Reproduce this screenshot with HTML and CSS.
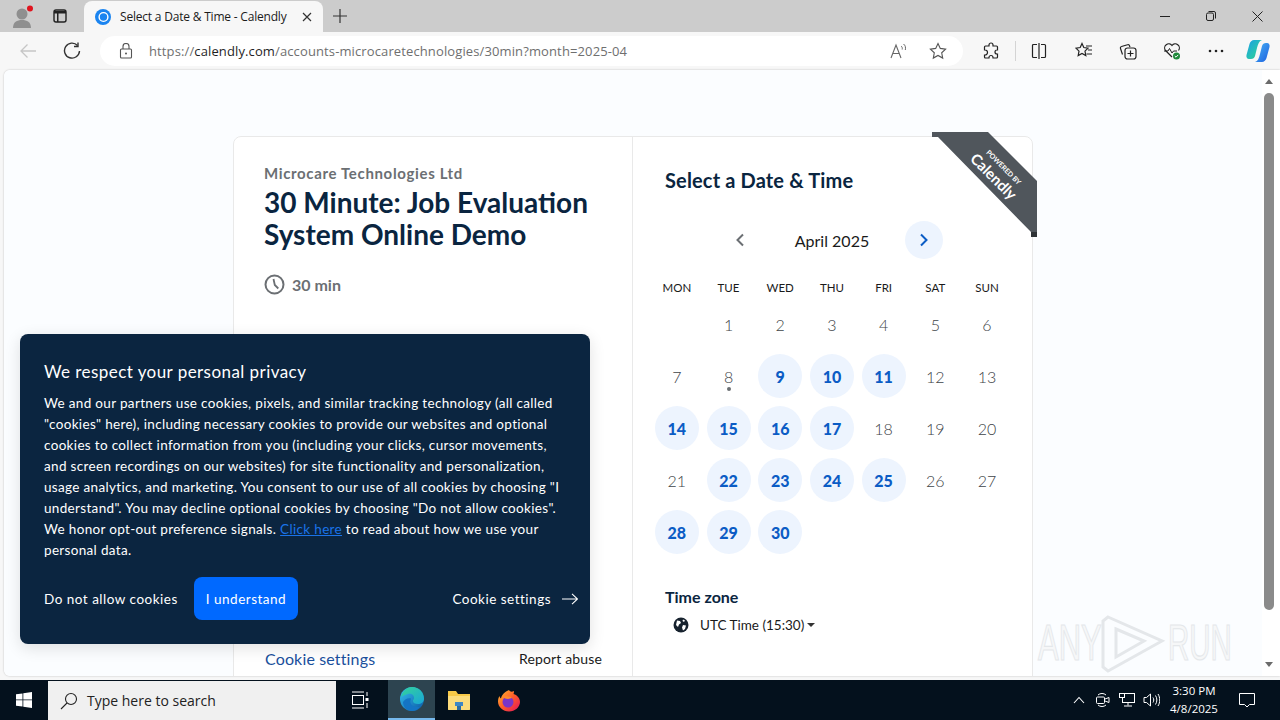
FILE: index.html
```html
<!DOCTYPE html>
<html lang="en">
<head>
<meta charset="UTF-8" />
<title>Select a Date &amp; Time - Calendly</title>
<link rel="stylesheet" href="styles.css">
</head>
<body>
<div class="screen">

  <!-- browser tab strip -->
  <div class="tabstrip">
    <div class="profile">
      <svg width="24" height="26" viewBox="0 0 24 26"><circle cx="10" cy="11" r="5.500" fill="#8f8f8f"/><path d="M1 25c0-6 4-8 9-8s9 2 9 8z" fill="#8f8f8f"/><circle cx="18" cy="5.500" r="3" fill="#e0141e"/></svg>
    </div>
    <div class="tabs-btn">
      <svg width="16" height="16" viewBox="0 0 16 16"><rect x="2" y="2" width="12" height="12" rx="2" fill="none" stroke="#222" stroke-width="1.400"/><path d="M2 3h12v2.500H6.500V14H5V5.500H2z" fill="#222"/></svg>
    </div>
    <div class="tab">
      <svg class="tab-icon" width="16" height="16" viewBox="0 0 16 16"><circle cx="8" cy="8" r="8" fill="#1a84f0"/><circle cx="8.500" cy="8" r="4.400" fill="none" stroke="#fff" stroke-width="1.400"/></svg>
      <span class="tab-title">Select a Date &amp; Time - Calendly</span>
      <svg class="tab-close" width="10" height="10" viewBox="0 0 10 10"><path d="M1 1l8 8M9 1l-8 8" stroke="#333" stroke-width="1.200"/></svg>
    </div>
    <div class="new-tab">
      <svg width="14" height="14" viewBox="0 0 14 14"><path d="M7 0v14M0 7h14" stroke="#333" stroke-width="1.200"/></svg>
    </div>
    <div class="grow"></div>
    <div class="win-btn"><svg width="10" height="10" viewBox="0 0 10 10"><path d="M0 5.500h10" stroke="#222"/></svg></div>
    <div class="win-btn"><svg width="10" height="10" viewBox="0 0 10 10"><rect x=".5" y="2" width="7" height="7.500" rx="1.500" fill="none" stroke="#222"/><path d="M2.500 .5h5.500a1.500 1.500 0 0 1 1.500 1.500v5.500" fill="none" stroke="#222"/></svg></div>
    <div class="win-btn"><svg width="11" height="11" viewBox="0 0 11 11"><path d="M.5 .5l10 10M10.500 .5l-10 10" stroke="#222"/></svg></div>
  </div>

  <!-- address bar row -->
  <div class="toolbar">
    <div class="nav-btn back">
      <svg width="18" height="16" viewBox="0 0 18 16"><path d="M17 8H2M8.500 1.500L2 8l6.500 6.500" fill="none" stroke="#c6c6c6" stroke-width="1.300"/></svg>
    </div>
    <div class="nav-btn reload">
      <svg width="18" height="18" viewBox="0 0 18 18"><path d="M14.500 3.500A7.500 7.500 0 1 0 16.500 9" fill="none" stroke="#333" stroke-width="1.400"/><path d="M15 .5v4h-4" fill="none" stroke="#333" stroke-width="1.400"/></svg>
    </div>
    <div class="address">
      <svg class="lock" width="14" height="16" viewBox="0 0 14 16"><rect x="1.500" y="6" width="11" height="9" rx="1" fill="none" stroke="#555" stroke-width="1.100"/><path d="M4 6V3.500a3 3 0 0 1 6 0V6" fill="none" stroke="#555" stroke-width="1.100"/><circle cx="7" cy="10.500" r="1" fill="#555"/></svg>
      <span class="url">https://<b>calendly.com</b>/accounts-microcaretechnologies/30min?month=2025-04</span>
      <div class="grow"></div>
      <svg class="addr-icon read" width="18" height="16" viewBox="0 0 18 16"><path d="M1 15L6 2l5 13M3 10.500h6" fill="none" stroke="#666" stroke-width="1.100"/><path d="M11 3c1.200.8 1.500 2 1.200 3.500M13.500 1c2 1.500 2.300 3.500 1.800 6" fill="none" stroke="#666"/></svg>
      <svg class="addr-icon star" width="18" height="18" viewBox="0 0 18 18"><path d="M9 1.500l2.300 4.900 5.300.7-3.900 3.700 1 5.300L9 13.500l-4.700 2.600 1-5.300-3.900-3.700 5.300-.7z" fill="none" stroke="#555" stroke-width="1.100"/></svg>
    </div>
    <div class="tool ext">
      <svg width="18" height="18" viewBox="0 0 18 18"><path d="M7 3a2 2 0 0 1 4 0v1h3.500a1 1 0 0 1 1 1v3H15a2 2 0 0 0 0 4h.5v3a1 1 0 0 1-1 1H11v-.5a2 2 0 0 0-4 0v.500H3.500a1 1 0 0 1-1-1V13H3a2.500 2.500 0 0 0 0-5h-.5V5a1 1 0 0 1 1-1H7z" fill="none" stroke="#222" stroke-width="1.200"/></svg>
    </div>
    <div class="tool-sep"></div>
    <div class="tool">
      <svg width="16" height="16" viewBox="0 0 16 16"><path d="M6 1.500H2.500a1 1 0 0 0-1 1v11a1 1 0 0 0 1 1H6M10 1.500h3.500a1 1 0 0 1 1 1v11a1 1 0 0 1-1 1H10M8 0v16" fill="none" stroke="#222" stroke-width="1.200"/></svg>
    </div>
    <div class="tool tool-fav">
      <svg width="18" height="18" viewBox="0 0 18 18"><path d="M7 1.500l1.800 4 4.200.6-3 3 .8 4.400L7 11.400l-3.800 2.100.8-4.400-3-3 4.200-.6z" fill="none" stroke="#222" stroke-width="1.200"/><path d="M11 4h6M13 8h4M11.500 12H17" stroke="#222" stroke-width="1.200"/></svg>
    </div>
    <div class="tool">
      <svg width="18" height="18" viewBox="0 0 18 18"><rect x="6" y="6" width="11" height="11" rx="2.500" fill="none" stroke="#222" stroke-width="1.200"/><path d="M11.500 8.500v6M8.500 11.500h6M3.500 12.500L1.500 6.500a1.500 1.500 0 0 1 1-2l6-1.800a1.500 1.500 0 0 1 2 1l.5 1.300" fill="none" stroke="#222" stroke-width="1.200"/></svg>
    </div>
    <div class="tool">
      <svg width="18" height="18" viewBox="0 0 18 18"><path d="M9 15L2.500 8.500a4 4 0 0 1 6.500-5 4 4 0 0 1 6.500 5" fill="none" stroke="#222" stroke-width="1.200"/><path d="M1 9h4l1.500-2.500L9 11l1.500-2H14" fill="none" stroke="#222"/><circle cx="13.500" cy="14" r="3.500" fill="#1f8a3b"/><path d="M11.800 14l1.200 1.200 2.200-2.300" fill="none" stroke="#fff"/></svg>
    </div>
    <div class="tool">
      <svg width="16" height="4" viewBox="0 0 16 4"><circle cx="2" cy="2" r="1.300" fill="#222"/><circle cx="8" cy="2" r="1.300" fill="#222"/><circle cx="14" cy="2" r="1.300" fill="#222"/></svg>
    </div>
    <div class="tool copilot">
      <svg width="24" height="24" viewBox="0 0 24 24"><defs><linearGradient id="cp1" x1="0" y1="0" x2="1" y2="1"><stop offset="0" stop-color="#1b9ee8"/><stop offset=".6" stop-color="#28c4b0"/><stop offset="1" stop-color="#2fb67e"/></linearGradient><linearGradient id="cp2" x1="0" y1="0" x2="1" y2="1"><stop offset="0" stop-color="#48b6f5"/><stop offset="1" stop-color="#1d5fe0"/></linearGradient></defs><path d="M8 1h8c-3 1-4 4-5 8l-2 8c-.5 2-2 3-4 3H3c-2 0-3-2-2.500-4l3-11C4 3 6 1 8 1z" fill="url(#cp1)"/><path d="M16 23H9c3-1 4-4 5-8l2-8c.5-2 2-3 4-3h1c2 0 3 2 2.500 4l-3 11c-.5 2-2.500 4-4.500 4z" fill="url(#cp2)"/></svg>
    </div>
  </div>

  <!-- page area -->
  <div class="viewport">
    <div class="content">
      <div class="card">
        <section class="event">
          <div class="org">Microcare Technologies Ltd</div>
          <h1 class="event-title">30 Minute: Job Evaluation System Online Demo</h1>
          <div class="duration">
            <svg width="21" height="21" viewBox="0 0 21 21"><circle cx="10.500" cy="10.500" r="9" fill="none" stroke="#6b6f73" stroke-width="2"/><path d="M9.500 5l1.300 6 3.500 3.500" fill="none" stroke="#6b6f73" stroke-width="1.800"/></svg>
            <span>30 min</span>
          </div>
          <div class="grow"></div>
          <div class="event-foot">
            <a class="foot-link">Cookie settings</a>
            <a class="foot-report">Report abuse</a>
          </div>
        </section>

        <section class="picker">
          <h2 class="picker-title">Select a Date &amp; Time</h2>
          <div class="month-nav">
            <span class="arrow">
              <svg width="10" height="14" viewBox="0 0 10 14"><path d="M8 1.500L2.500 7 8 12.500" fill="none" stroke="#6b6f73" stroke-width="2"/></svg>
            </span>
            <span class="month">April 2025</span>
            <span class="arrow arrow-next">
              <svg width="10" height="14" viewBox="0 0 10 14"><path d="M2 1.500L7.500 7 2 12.500" fill="none" stroke="#0b5cc5" stroke-width="2"/></svg>
            </span>
          </div>
          <div class="weekdays">
            <span>MON</span><span>TUE</span><span>WED</span><span>THU</span><span>FRI</span><span>SAT</span><span>SUN</span>
          </div>
          <div class="days">
            <span class="day"></span>
            <span class="day">1</span>
            <span class="day">2</span>
            <span class="day">3</span>
            <span class="day">4</span>
            <span class="day">5</span>
            <span class="day">6</span>
            <span class="day">7</span>
            <span class="day today">8</span>
            <span class="day open">9</span>
            <span class="day open">10</span>
            <span class="day open">11</span>
            <span class="day">12</span>
            <span class="day">13</span>
            <span class="day open">14</span>
            <span class="day open">15</span>
            <span class="day open">16</span>
            <span class="day open">17</span>
            <span class="day">18</span>
            <span class="day">19</span>
            <span class="day">20</span>
            <span class="day">21</span>
            <span class="day open">22</span>
            <span class="day open">23</span>
            <span class="day open">24</span>
            <span class="day open">25</span>
            <span class="day">26</span>
            <span class="day">27</span>
            <span class="day open">28</span>
            <span class="day open">29</span>
            <span class="day open">30</span>
          </div>
          <div class="tz">
            <div class="tz-label">Time zone</div>
            <div class="tz-value">
              <svg width="16" height="16" viewBox="0 0 16 16"><circle cx="8" cy="8" r="7.500" fill="#17222e"/><path d="M4 3.500l3 .5 1 2-2 1.500-1 2.500-2-2zM10 8l3 .5-1 3.500-2 1.500-1-3zM10 2.500l2 1-1 1.500-1.500-1z" fill="#fff"/></svg>
              <span>UTC Time (15:30)</span>
              <i class="caret"></i>
            </div>
          </div>
        </section>

        <!-- corner ribbon -->
        <div class="ribbon">
          <svg width="105" height="105" viewBox="0 0 105 105"><path d="M0 0l6 5h-6zM99 100h6v5h-6z" fill="#2e3236"/><path d="M0 0h56l49 49v51h-6L6 5H0z" fill="#50565c"/></svg>
          <span class="ribbon-small">POWERED BY</span>
          <span class="ribbon-name">Calendly</span>
        </div>
      </div>

      <!-- cookie notice -->
      <div class="cookie">
        <div class="cookie-title">We respect your personal privacy</div>
        <p class="cookie-text">We and our partners use cookies, pixels, and similar tracking technology (all called "cookies" here), including necessary cookies to provide our websites and optional cookies to collect information from you (including your clicks, cursor movements, and screen recordings on our websites) for site functionality and personalization, usage analytics, and marketing. You consent to our use of all cookies by choosing "I understand". You may decline optional cookies by choosing "Do not allow cookies". We honor opt-out preference signals. <a class="cookie-link">Click here</a> to read about how we use your personal data.</p>
        <div class="grow"></div>
        <div class="cookie-actions">
          <a class="cookie-deny">Do not allow cookies</a>
          <button class="cookie-accept">I understand</button>
          <div class="grow"></div>
          <a class="cookie-settings">Cookie settings
            <svg width="16" height="12" viewBox="0 0 16 12"><path d="M0 6h15.500M10 .8L15.500 6 10 11.200" fill="none" stroke="#fff" stroke-width="1.100"/></svg>
          </a>
        </div>
      </div>

      <!-- sandbox watermark -->
      <svg class="watermark" width="200" height="64" viewBox="0 0 200 64">
        <g transform="translate(2 51) scale(.62 1)"><text class="wm-text">ANY</text></g>
        <path d="M72 8l54 24-54 30-5-4V12zM80 20l28 12-28 16z" fill="none" stroke="#e4e7ea" stroke-width="3"/>
        <g transform="translate(132 51) scale(.59 1)"><text class="wm-text">RUN</text></g>
      </svg>
    </div>

    <div class="scrollbar">
      <i class="sb-up"></i>
      <div class="sb-thumb"></div>
      <i class="sb-down"></i>
    </div>
  </div>

  <!-- windows taskbar -->
  <div class="taskbar">
    <div class="start">
      <svg width="16" height="16" viewBox="0 0 16 16"><path d="M0 2.300l6.500-.9v6.100H0zM7.300 1.300L16 0v7.500H7.300zM0 8.300h6.500v6.200L0 13.700zM7.300 8.300H16V16l-8.700-1.200z" fill="#fff"/></svg>
    </div>
    <div class="search">
      <svg width="18" height="18" viewBox="0 0 18 18"><circle cx="11" cy="7" r="5.500" fill="none" stroke="#222" stroke-width="1.100"/><path d="M7 11l-6 6" stroke="#222" stroke-width="1.100"/></svg>
      <span>Type here to search</span>
    </div>
    <div class="task-item">
      <svg width="18" height="18" viewBox="0 0 18 18"><path d="M1 1h12M1 17h12" stroke="#fff"/><rect x="1.500" y="4.500" width="11" height="9" fill="none" stroke="#fff"/><path d="M16 1v4M16 12v5" stroke="#fff"/><rect x="14.500" y="7" width="3" height="3" fill="#fff"/></svg>
    </div>
    <div class="task-item task-active">
      <svg width="24" height="24" viewBox="0 0 24 24"><defs><linearGradient id="ed1" x1="0" y1="0" x2="1" y2="1"><stop offset="0" stop-color="#35c1f1"/><stop offset="1" stop-color="#0c59a4"/></linearGradient><linearGradient id="ed2" x1="0" y1="0" x2="1" y2="1"><stop offset="0" stop-color="#34d399"/><stop offset="1" stop-color="#1aa6d8"/></linearGradient></defs><circle cx="12" cy="12" r="12" fill="url(#ed1)"/><path d="M1 10C3 3 8 0 12 0c7 0 12 5 12 12 0 3-3 5-6 5-3 0-5-1-5-3 0-1 .7-1.600 1-2.500C14.500 8 11 6 8 7c-3 .8-5.500 2-7 3z" fill="url(#ed2)"/><path d="M11 12c-2 4 1 8 6 8 1 0 2 0 3-.5-2 3-5 4.500-8 4.500-5 0-9-4-9-9 2-3 5-4.500 8-3.500z" fill="#1474c4"/></svg>
    </div>
    <div class="task-item">
      <svg width="24" height="22" viewBox="0 0 24 22"><path d="M1 2h8l2 3h12v15a1 1 0 0 1-1 1H2a1 1 0 0 1-1-1z" fill="#f7c948"/><path d="M1 7h22v13a1 1 0 0 1-1 1H2a1 1 0 0 1-1-1z" fill="#fcdc7c"/><rect x="8" y="13" width="8" height="4" fill="#3f87c5"/><rect x="10" y="17" width="4" height="4" fill="#2a6aa3"/></svg>
    </div>
    <div class="task-item task-fox">
      <svg width="24" height="24" viewBox="0 0 24 24"><defs><linearGradient id="ff1" x1="0" y1="0" x2="1" y2="1"><stop offset="0" stop-color="#ffbd2e"/><stop offset=".5" stop-color="#ff5a2a"/><stop offset="1" stop-color="#e0115f"/></linearGradient></defs><path d="M12 2c1 2 3 2 5 1 0 1 0 2-.5 3C20 7 23 10 23 14c0 5-5 9.500-11 9.500S1 19 1 13.500c0-2 .5-4 1.500-5.500.2 1 .6 2 1.500 2.500C4.500 7 8 3.500 12 2z" fill="url(#ff1)"/><circle cx="11" cy="14" r="5.500" fill="#7a35c9"/><path d="M6 9c3-2 7-1 9 1l-4 1c-2 0-4-1-5-2z" fill="#ff8a2a"/></svg>
    </div>
    <div class="grow"></div>
    <div class="tray">
      <span class="tray-item"><svg width="12" height="8" viewBox="0 0 12 8"><path d="M1 7l5-5.500L11 7" fill="none" stroke="#fff" stroke-width="1.100"/></svg></span>
      <span class="tray-item"><svg width="14" height="18" viewBox="0 0 14 18"><path d="M2 4a6 6 0 0 1 8 0M2 14a6 6 0 0 0 8 0" fill="none" stroke="#fff"/><rect x=".5" y="6" width="8" height="6.500" rx="1" fill="none" stroke="#fff"/><path d="M9 8l4-1.500v5L9 10" fill="none" stroke="#fff"/></svg></span>
      <span class="tray-item"><svg width="16" height="16" viewBox="0 0 16 16"><rect x="3.500" y="1.500" width="12" height="9" fill="none" stroke="#fff"/><rect x=".5" y="1.500" width="5" height="4" fill="#04111d" stroke="#fff"/><path d="M9 10.500v3M5 14h8" stroke="#fff"/></svg></span>
      <span class="tray-item"><svg width="17" height="14" viewBox="0 0 17 14"><path d="M1 4.500h2.500L7.500 1v12l-4-3.500H1z" fill="none" stroke="#fff"/><path d="M10 4.500c1 1.500 1 3.500 0 5M12.500 2.500c1.800 2.800 1.800 6.200 0 9M15 1c2.300 3.500 2.300 8.500 0 12" fill="none" stroke="#fff"/></svg></span>
    </div>
    <div class="clock"><span>3:30 PM</span><span>4/8/2025</span></div>
    <div class="notify">
      <svg width="16" height="16" viewBox="0 0 16 16"><path d="M.5 1.500h15v11h-5l-2.500 2.500-2.500-2.500h-5z" fill="none" stroke="#fff"/></svg>
    </div>
  </div>
</div>
</body>
</html>
```
FILE: styles.css
```css
/* Basic reset */
* {
  box-sizing: border-box;
}

html, body {
  margin: 0;
  height: 100vh;
  overflow: hidden;
  font-family: "Lato", Arial, sans-serif;
}

h1, h2, p {
  margin: 0;
}

.grow {
  flex: 1;
}

.screen {
  display: flex;
  flex-direction: column;
  height: 720px;
  background: #f7f7f7;
}

/* Tab strip */
.tabstrip {
  display: flex;
  align-items: stretch;
  height: 32px;
  background: #cccccc;
  flex-shrink: 0;
}

.profile {
  width: 44px;
  padding-left: 4px;
  display: flex;
  align-items: center;
  justify-content: center;
}

.tabs-btn {
  width: 32px;
  display: flex;
  align-items: center;
  justify-content: center;
}

.tab {
  width: 239px;
  margin: 1px 0 0 8px;
  padding: 0 10px 0 11px;
  display: flex;
  align-items: center;
  background: #f7f7f7;
  border-radius: 8px 8px 0 0;
}

.tab-icon {
  flex-shrink: 0;
}

.tab-title {
  margin-left: 9px;
  flex: 1;
  font: 12px "Open Sans", sans-serif;
  letter-spacing: -0.2px;
  color: #1b1b1b;
  white-space: nowrap;
}

.tab-close {
  margin-right: 1px;
}

.new-tab {
  width: 34px;
  display: flex;
  align-items: center;
  justify-content: center;
}

.win-btn {
  width: 46px;
  display: flex;
  align-items: center;
  justify-content: center;
}

/* Address bar row */
.toolbar {
  display: flex;
  align-items: center;
  height: 38px;
  padding-left: 8px;
  background: #f7f7f7;
  flex-shrink: 0;
}

.nav-btn {
  display: flex;
  align-items: center;
  justify-content: center;
}

.back {
  width: 40px;
}

.reload {
  width: 48px;
}

.address {
  display: flex;
  align-items: center;
  width: 863px;
  height: 30px;
  margin-left: 4px;
  padding: 0 16px 0 19px;
  background: #fff;
  border-radius: 15px;
}

.url {
  margin-left: 16px;
  font: 13px "Open Sans", sans-serif;
  letter-spacing: 0.12px;
  color: #6f6f6f;
  white-space: nowrap;
}

.url b {
  font-weight: 400;
  color: #1f1f1f;
}

.read {
  margin-right: 21px;
}

.tool {
  width: 44px;
  display: flex;
  align-items: center;
  justify-content: center;
}

.ext {
  margin-left: 6px;
}

.tool-fav {
  margin-left: 1px;
}

.tool-sep {
  width: 1px;
  height: 20px;
  margin: 0 1px 0 2px;
  background: #d4d4d4;
}

.copilot {
  width: 40px;
}

/* Page area */
.viewport {
  display: flex;
  flex: 1;
  min-height: 0;
  margin: 0 0 4px 4px;
  background: #fff;
  border-radius: 6px 0 0 6px;
  box-shadow: 0 0 2px rgba(0,0,0,0.25);
  overflow: hidden;
}

.content {
  position: relative;
  display: flex;
  flex: 1;
  min-width: 0;
  padding: 66px 0 0 229px;
  background: #fbfdff;
  overflow: hidden;
}

.card {
  position: relative;
  display: flex;
  width: 800px;
  margin-bottom: -10px;
  background: #fff;
  border: 1px solid #e9e9e9;
  border-radius: 8px;
}

/* Left column of the card */
.event {
  display: flex;
  flex-direction: column;
  width: 399px;
  padding: 27px 30px 17px 30px;
  border-right: 1px solid #e9e9e9;
}

.org {
  font-size: 15px;
  line-height: 18px;
  font-weight: 700;
  letter-spacing: 0.65px;
  color: #6b6f73;
}

.event-title {
  margin-top: 4px;
  font-size: 28px;
  line-height: 32px;
  font-weight: 700;
  color: #0a2540;
}

.duration {
  display: flex;
  align-items: center;
  gap: 7px;
  margin-top: 24px;
  font-size: 16px;
  font-weight: 700;
  color: #6b6f73;
}

.event-foot {
  display: flex;
  justify-content: space-between;
  align-items: center;
}

.foot-link {
  margin-left: 1px;
  font-size: 16px;
  letter-spacing: 0.15px;
  color: #1a4f9c;
}

.foot-report {
  font-size: 14px;
  letter-spacing: 0.15px;
  color: #1a1a1a;
}

/* Right column of the card */
.picker {
  flex: 1;
  padding: 31px 19px 0 18px;
}

.picker-title {
  margin-left: 14px;
  font-size: 20px;
  line-height: 24px;
  font-weight: 700;
  letter-spacing: 0.15px;
  color: #0a2540;
}

.month-nav {
  display: flex;
  align-items: center;
  justify-content: center;
  margin-top: 29px;
  height: 38px;
}

.arrow {
  display: flex;
  align-items: center;
  justify-content: center;
  width: 38px;
  height: 38px;
  border-radius: 50%;
}

.arrow-next {
  background: #edf4fe;
}

.month {
  width: 146px;
  text-align: center;
  font-size: 16px;
  color: #1a1a1a;
}

.weekdays {
  display: grid;
  grid-template-columns: repeat(7, 51.7px);
  margin-top: 19px;
  text-align: center;
  font-size: 11.500px;
  line-height: 20px;
  color: #1a1a1a;
}

.days {
  display: grid;
  grid-template-columns: repeat(7, 51.7px);
  grid-auto-rows: 52px;
  justify-items: center;
  align-items: center;
}

.day {
  position: relative;
  display: flex;
  align-items: center;
  justify-content: center;
  width: 44px;
  height: 44px;
  border-radius: 50%;
  font-size: 16px;
  font-weight: 300;
  color: #404448;
}

.open {
  background: #edf4fe;
  color: #0b5cc5;
  font-weight: 900;
}

.today::after {
  content: "";
  position: absolute;
  bottom: 7px;
  left: 20px;
  width: 4px;
  height: 4px;
  border-radius: 50%;
  background: #6b6f73;
}

.tz {
  margin: 29px 0 0 14px;
}

.tz-label {
  font-size: 16px;
  line-height: 20px;
  font-weight: 700;
  color: #0a2540;
}

.tz-value {
  display: flex;
  align-items: center;
  margin: 8px 0 0 8px;
  font-size: 13.500px;
  line-height: 20px;
  color: #1a1a1a;
}

.tz-value span {
  margin-left: 11px;
}

.caret {
  margin-left: 3px;
  border: 4px solid transparent;
  border-top-color: #333;
  border-bottom: 0;
}

/* Corner ribbon */
.ribbon {
  position: absolute;
  top: -5px;
  right: -5px;
  width: 105px;
  height: 105px;
  color: #fff;
}

.ribbon svg {
  display: block;
}

.ribbon-small,
.ribbon-name {
  position: absolute;
  white-space: nowrap;
  transform: translate(-50%, -50%) rotate(45deg);
}

.ribbon-small {
  left: 72px;
  top: 35px;
  font-size: 7px;
  font-weight: 700;
}

.ribbon-name {
  left: 62px;
  top: 44px;
  font-size: 15px;
  font-weight: 700;
}

/* Cookie notice */
.cookie {
  position: absolute;
  left: 16px;
  top: 264px;
  display: flex;
  flex-direction: column;
  width: 570px;
  height: 310px;
  padding: 26px 24px 24px 24px;
  background: #0b2540;
  border-radius: 8px;
  box-shadow: 0 4px 16px rgba(0,0,0,0.12);
  color: #fff;
}

.cookie-title {
  font-size: 17px;
  line-height: 24px;
  letter-spacing: 0.44px;
}

.cookie-text {
  margin-top: 9px;
  font-size: 13.500px;
  line-height: 21px;
  letter-spacing: 0.33px;
}

.cookie-link {
  color: #1a73e8;
  text-decoration: underline;
}

.cookie-actions {
  display: flex;
  align-items: center;
  font-size: 13.500px;
  letter-spacing: 0.5px;
}

.cookie-accept {
  height: 43px;
  margin-left: 16px;
  padding: 0 12px;
  border: none;
  border-radius: 8px;
  background: #0069ff;
  color: #fff;
  font: inherit;
  letter-spacing: inherit;
}

.cookie-settings {
  display: flex;
  align-items: center;
  gap: 11px;
  margin-right: -12px;
}

/* Watermark */
.watermark {
  position: absolute;
  right: 26px;
  bottom: 3px;
  pointer-events: none;
}

.wm-text {
  font-family: "Liberation Sans", Arial, sans-serif;
  font-size: 50px;
  fill: #f6f7f8;
  stroke: #e4e7ea;
  stroke-width: 1.2px;
}

/* Scrollbar */
.scrollbar {
  display: flex;
  flex-direction: column;
  align-items: center;
  width: 18px;
  padding: 9px 4px 9px 0;
  background: #fff;
}

.sb-up,
.sb-down {
  border: 4px solid transparent;
}

.sb-up {
  border-bottom: 5px solid #6b6b6b;
  border-top: 0;
}

.sb-down {
  border-top: 5px solid #6b6b6b;
  border-bottom: 0;
}

.sb-thumb {
  width: 10px;
  height: 517px;
  margin: 9px 0 auto 0;
  border-radius: 5px;
  background: #8a8a8a;
}

/* Taskbar */
.taskbar {
  display: flex;
  align-items: stretch;
  height: 40px;
  background: #04111d;
  flex-shrink: 0;
}

.start {
  width: 48px;
  display: flex;
  align-items: center;
  justify-content: center;
}

.search {
  display: flex;
  align-items: center;
  gap: 9px;
  width: 288px;
  padding-left: 12px;
  margin-top: 1px;
  background: #f0f0f0;
  font: 14px "Open Sans", sans-serif;
  color: #222;
}

.task-item {
  width: 48px;
  display: flex;
  align-items: center;
  justify-content: center;
}

.task-active {
  width: 47px;
  margin-left: 4px;
  background: #2d4450;
  border-bottom: 2px solid #76b9ed;
}

.task-fox {
  margin-left: 2px;
}

.tray {
  display: flex;
  align-items: center;
}

.tray-item {
  width: 24px;
  display: flex;
  align-items: center;
  justify-content: center;
}

.clock {
  display: flex;
  flex-direction: column;
  align-items: center;
  justify-content: center;
  width: 62px;
  font: 11.500px/18px "Open Sans", sans-serif;
  color: #fff;
}

.notify {
  width: 44px;
  margin-right: 11px;
  display: flex;
  align-items: center;
  justify-content: center;
}
```
